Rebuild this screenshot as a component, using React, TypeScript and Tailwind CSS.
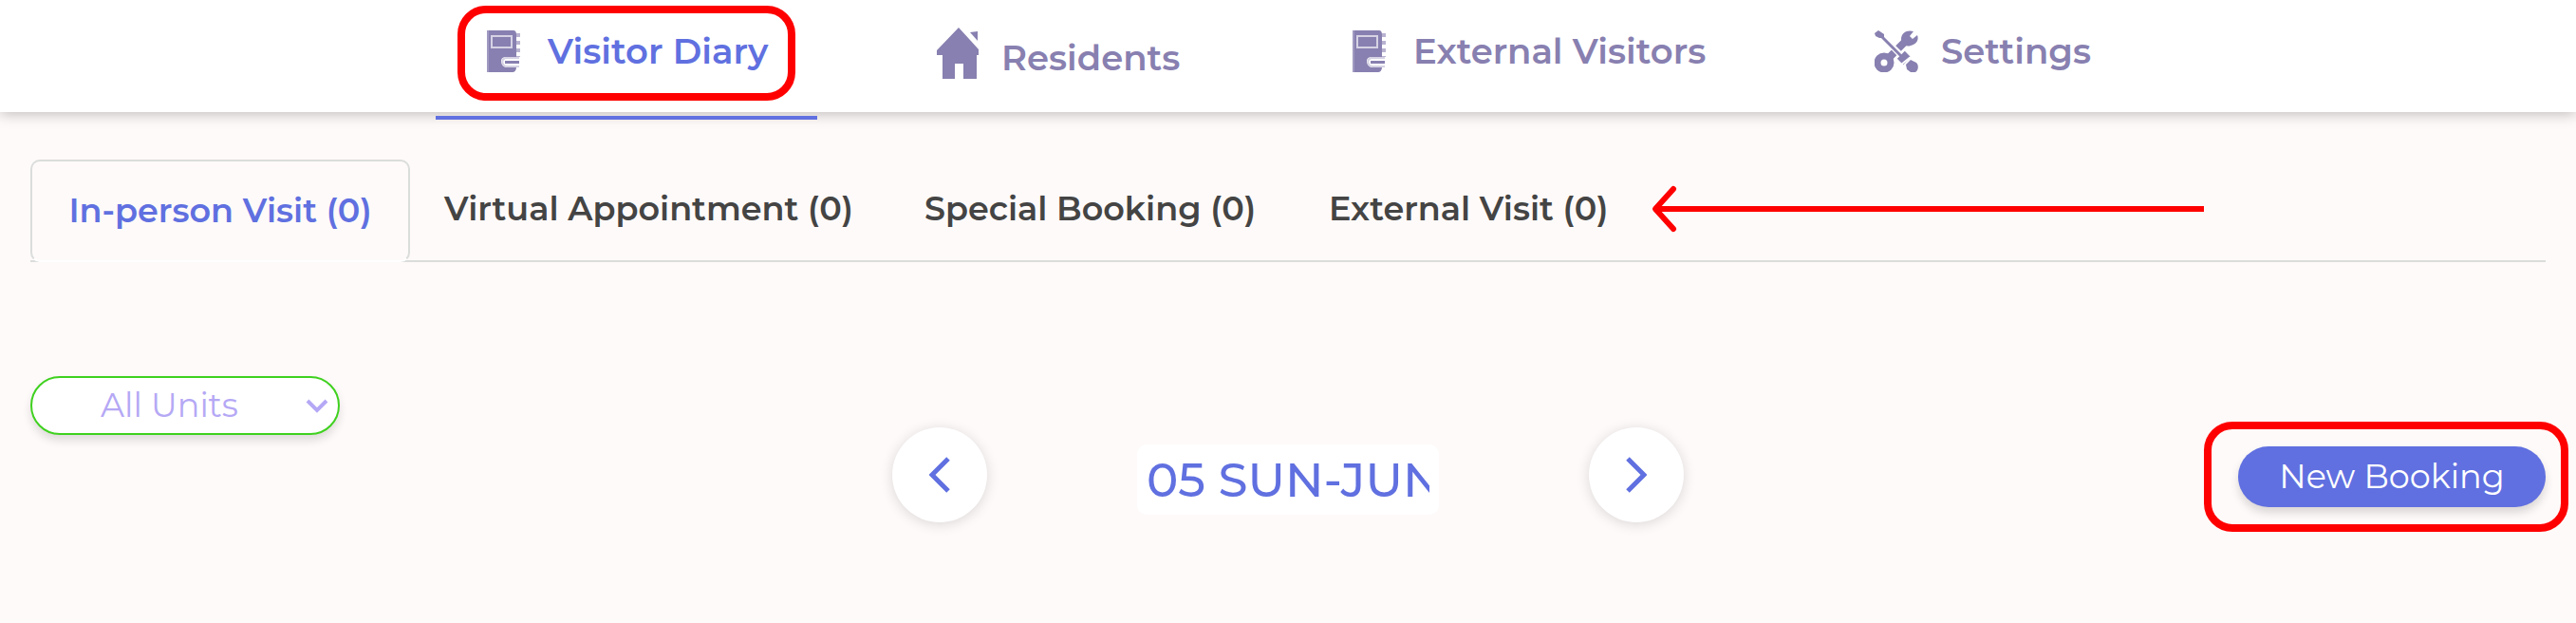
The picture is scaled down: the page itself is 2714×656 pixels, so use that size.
import { ReactNode } from "react";

const DiaryIcon = () => (
	<svg viewBox="0 0 36 44" className="h-11 w-9 shrink-0" fill="none" aria-hidden="true">
		<path fill="#8880b0" d="M0 0H28C30 0 31 2 31 4V28H20C15 28 14 32 16 36C17 38 19 39 21 39H31C31 42 29 44 27 44H0Z" />
		<path stroke="#d6d2e4" strokeWidth="2" d="M5 6H26V18H5Z" />
		<path stroke="#d6d2e4" strokeWidth="2" d="M34 29H20C15 30 15 37 21 38H34" />
		<path fill="#8880b0" d="M19 32H34V35H19Z" />
		<path stroke="#b9b3d0" strokeWidth="4" strokeDasharray="4 4" d="M33 3V28" />
		<path stroke="#b9b3d0" strokeWidth="1" d="M1 0V44" />
	</svg>
);

const HouseIcon = () => (
	<svg viewBox="0 0 44 54" className="mb-2.5 h-[54px] w-11 shrink-0" fill="#8880b0" aria-hidden="true">
		<path d="M23 0L44 23V29H42V54H28V38H19V54H6V29H0V24Z" />
		<path d="M35 5L43 4V14Z" />
	</svg>
);

const ToolsIcon = () => (
	<svg viewBox="0 0 46 44" className="h-11 w-[46px] shrink-0" fill="none" aria-hidden="true">
		<path stroke="#8880b0" strokeWidth="8" d="M13 31L21 23M25 19L33 11" />
		<circle cx="10" cy="34" r="7" stroke="#8880b0" strokeWidth="7" />
		<path fill="#8880b0" d="M41 1C35 -1 28 2 28 9C28 14 33 18 38 16C44 15 47 10 45 5L40 9L37 6Z" />
		<path stroke="#fff" strokeWidth="6" d="M8 6L31 30" />
		<path stroke="#8880b0" strokeWidth="3" d="M7 6L29 28" />
		<path fill="#8880b0" d="M0 3L4 0L10 4V8H5L1 6Z" />
		<path stroke="#8880b0" strokeWidth="9" d="M27 33L35 25" />
		<path stroke="#fff" strokeWidth="2" d="M28 36L38 28" />
		<path fill="#8880b0" d="M33 36L38 31L44 34C47 37 46 42 43 44H38L34 41Z" />
	</svg>
);

const Highlight = ({ className }: { className: string }) => (
	<span className={`pointer-events-none absolute rounded-[30px] border-8 border-[#ff0000] ${className}`} />
);

type NavItemProps = { icon: ReactNode; label: string; className: string; active?: boolean };

const NavItem = ({ icon, label, className, active }: NavItemProps) => (
	<a
		href="#"
		className={`relative flex items-center pl-[54px] text-[37px] font-semibold whitespace-nowrap ${className} ${active ? "text-[#6070e0]" : "text-[#8880b0]"}`}
	>
		{icon}
		<span>{label}</span>
		{active && (
			<>
				<Highlight className="inset-x-[23px] top-1.5 h-[100px]" />
				<span className="absolute inset-x-0 -bottom-2 h-1 bg-[#6070e0]" />
			</>
		)}
	</a>
);

const tabs = ["Virtual Appointment (0)", "Special Booking (0)", "External Visit (0)"];
const tabWidths = ["w-[506px]", "w-[426px]", "w-[330px]"];

const App = () => {
	return (
		<div className="min-h-screen overflow-hidden bg-[#fefaf9] font-['Montserrat','Inter',sans-serif]">
			<header className="relative bg-white shadow-[0_2px_14px_rgba(0,0,0,0.25)]">
				<nav className="flex h-[118px] justify-center gap-[72px]">
					<NavItem active icon={<DiaryIcon />} label="Visitor Diary" className="w-[402px] gap-7 pb-2.5" />
					<NavItem icon={<HouseIcon />} label="Residents" className="w-[366px] gap-6 pt-1" />
					<NavItem icon={<DiaryIcon />} label="External Visitors" className="w-[478px] gap-7 pb-2.5" />
					<NavItem icon={<ToolsIcon />} label="Settings" className="w-[334px] gap-6 pb-2.5" />
				</nav>
			</header>

			<main className="px-8 pt-[50px]">
				<div role="tablist" className="flex h-[108px] items-stretch border-b-2 border-[#dadddb] text-[35px] font-semibold whitespace-nowrap text-[#444]">
					<button
						role="tab"
						aria-selected="true"
						className="-mb-0.5 w-[400px] rounded-[10px] border-2 border-[#dadddb] border-b-white bg-[#fefaf9] text-[#6070e0]"
					>
						In-person Visit (0)
					</button>
					{tabs.map((tab, i) => (
						<button key={tab} role="tab" aria-selected="false" className={`pb-0.5 pl-9 text-left ${tabWidths[i]}`}>
							{tab}
						</button>
					))}
					<svg viewBox="0 0 628 108" className="h-[108px] w-[628px] shrink-0" fill="none" stroke="#ff0000" strokeWidth="6" aria-hidden="true">
						<path d="M50 52H628" />
						<path d="M69 31L50 52L69 73" strokeLinecap="round" strokeLinejoin="round" />
					</svg>
				</div>

				<div className="mt-[120px] grid grid-cols-[1fr_auto_1fr] items-start">
					<div className="relative w-[326px]">
						<select
							aria-label="Unit"
							className="h-[62px] w-full appearance-none rounded-full border-2 border-[#3fd11f] bg-white pl-[72px] text-[35px] text-[#b5a8f5] shadow-[0_6px_10px_rgba(0,0,0,0.12)]"
						>
							<option>All Units</option>
						</select>
						<svg viewBox="0 0 24 16" className="pointer-events-none absolute top-6 right-3 h-4 w-6" fill="none" stroke="#b5a8f5" strokeWidth="4" aria-hidden="true">
							<path d="M2 2L12 12L22 2" />
						</svg>
					</div>

					<div className="mt-[54px] flex items-center gap-[158px]">
						<button aria-label="Previous day" className="flex size-[100px] items-center justify-center rounded-full bg-white shadow-[0_2px_14px_rgba(0,0,0,0.14)]">
							<svg viewBox="0 0 22 38" className="h-[38px] w-[22px]" fill="none" stroke="#6070e0" strokeWidth="5" aria-hidden="true">
								<path d="M20 2L3 19L20 36" />
							</svg>
						</button>
						<input
							aria-label="Date"
							defaultValue="05 SUN-JUNE"
							className="mt-2.5 h-[74px] w-[318px] rounded-[10px] bg-white px-2.5 text-[50px] font-medium text-[#6070e0]"
						/>
						<button aria-label="Next day" className="flex size-[100px] items-center justify-center rounded-full bg-white shadow-[0_2px_14px_rgba(0,0,0,0.14)]">
							<svg viewBox="0 0 22 38" className="h-[38px] w-[22px]" fill="none" stroke="#6070e0" strokeWidth="5" aria-hidden="true">
								<path d="M2 2L19 19L2 36" />
							</svg>
						</button>
					</div>

					<div className="relative mt-[74px] justify-self-end">
						<button className="block h-16 w-[324px] rounded-full bg-[#6070e0] text-[35px] text-white shadow-[0_6px_10px_rgba(0,0,0,0.14)]">
							New Booking
						</button>
						<Highlight className="-top-[26px] -right-6 -left-9 h-[116px]" />
					</div>
				</div>
			</main>
		</div>
	);
};
export default App;
